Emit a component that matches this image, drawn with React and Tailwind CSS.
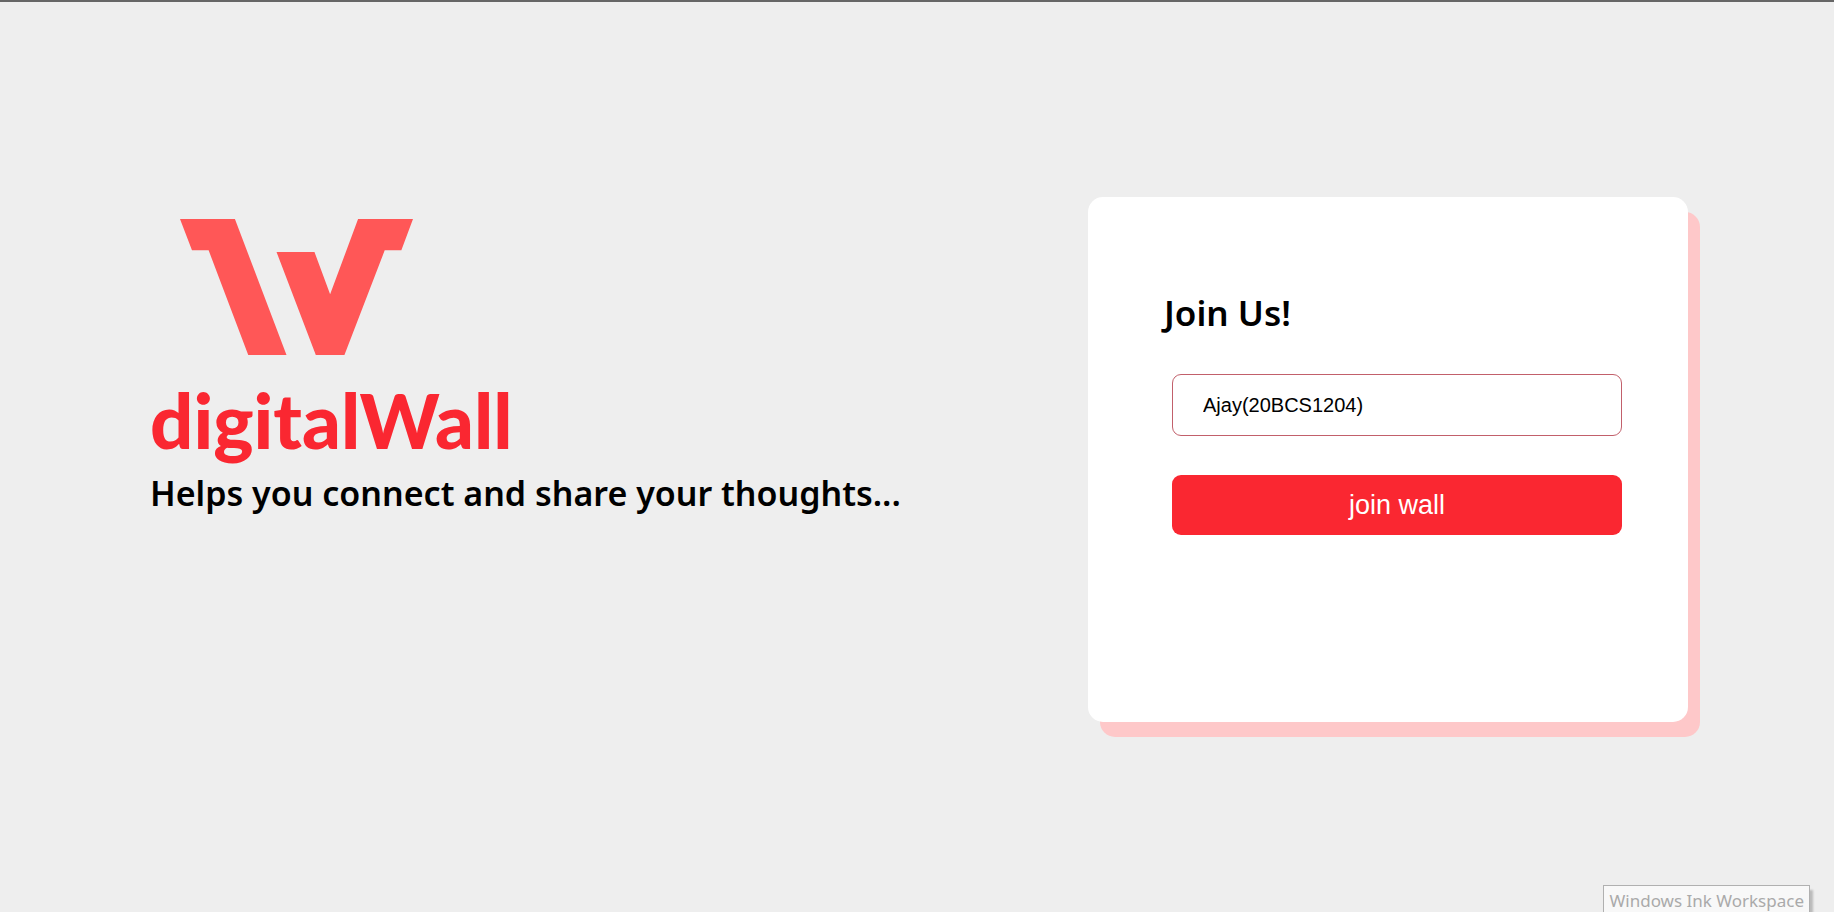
function Logo() {
  return (
    <svg className="ml-[30px] h-[136px] w-[233px]" viewBox="0 0 700 408" preserveAspectRatio="none" fill="#ff5757" role="img" aria-label="digitalWall logo">
      <path d="M0 0H165L320 408H205L86 94H36Z" />
      <path d="M290 99H404L451 226L535 0H700L665 94H615L494 408H408Z" />
    </svg>
  );
}

function Brand() {
  return (
    <section className="flex flex-col items-start pt-[22px] pl-1">
      <Logo />
      <h1 className="mt-5 font-['Comic_Sans_MS',Lato,sans-serif] text-[76px] leading-[90px] font-black text-[#fa2731]">
        digitalWall
      </h1>
      <p className="mt-1 font-['Segoe_UI','Noto_Sans',sans-serif] text-[34px] leading-[48px] font-semibold text-black">
        Helps you connect and share your thoughts...
      </p>
    </section>
  );
}

function JoinCard() {
  return (
    <form
      className="flex min-h-[525px] w-[600px] shrink-0 flex-col rounded-[15px] bg-white pt-[92px] pr-[66px] pb-16 pl-[76px] shadow-[12px_15px_0_#fec8c9]"
      onSubmit={(event) => event.preventDefault()}
    >
      <h2 className="font-['Segoe_UI','Noto_Sans',sans-serif] text-[35px] leading-[48px] font-semibold text-black">
        Join Us!
      </h2>
      <div className="mt-[37px] ml-2 flex flex-col gap-[39px] font-['Liberation_Sans',Arial,sans-serif]">
        <input
          type="text"
          aria-label="Name"
          defaultValue="Ajay(20BCS1204)"
          className="h-[62px] w-full rounded-[9px] border border-[#c2606b] bg-white px-[30px] text-[20px] text-black outline-none"
        />
        <button type="submit" className="h-[60px] w-full rounded-[9px] bg-[#fa2731] text-[27px] text-white">
          join wall
        </button>
      </div>
    </form>
  );
}

export default function App() {
  return (
    <div className="relative flex min-h-screen flex-col overflow-hidden border-t-2 border-[#666] bg-[#eee]">
      <main className="flex items-start justify-between gap-8 px-[146px] pt-[195px] pb-24">
        <Brand />
        <JoinCard />
      </main>
      <div
        role="tooltip"
        className="absolute right-6 -bottom-1 border border-[#b0b0b0] bg-[#f8f8f8] px-[5px] font-['Segoe_UI','Noto_Sans',sans-serif] text-[17px] leading-[29px] whitespace-nowrap text-[#aaa] shadow-[3px_5px_2px_#bbb]"
      >
        Windows Ink Workspace
      </div>
    </div>
  );
}
